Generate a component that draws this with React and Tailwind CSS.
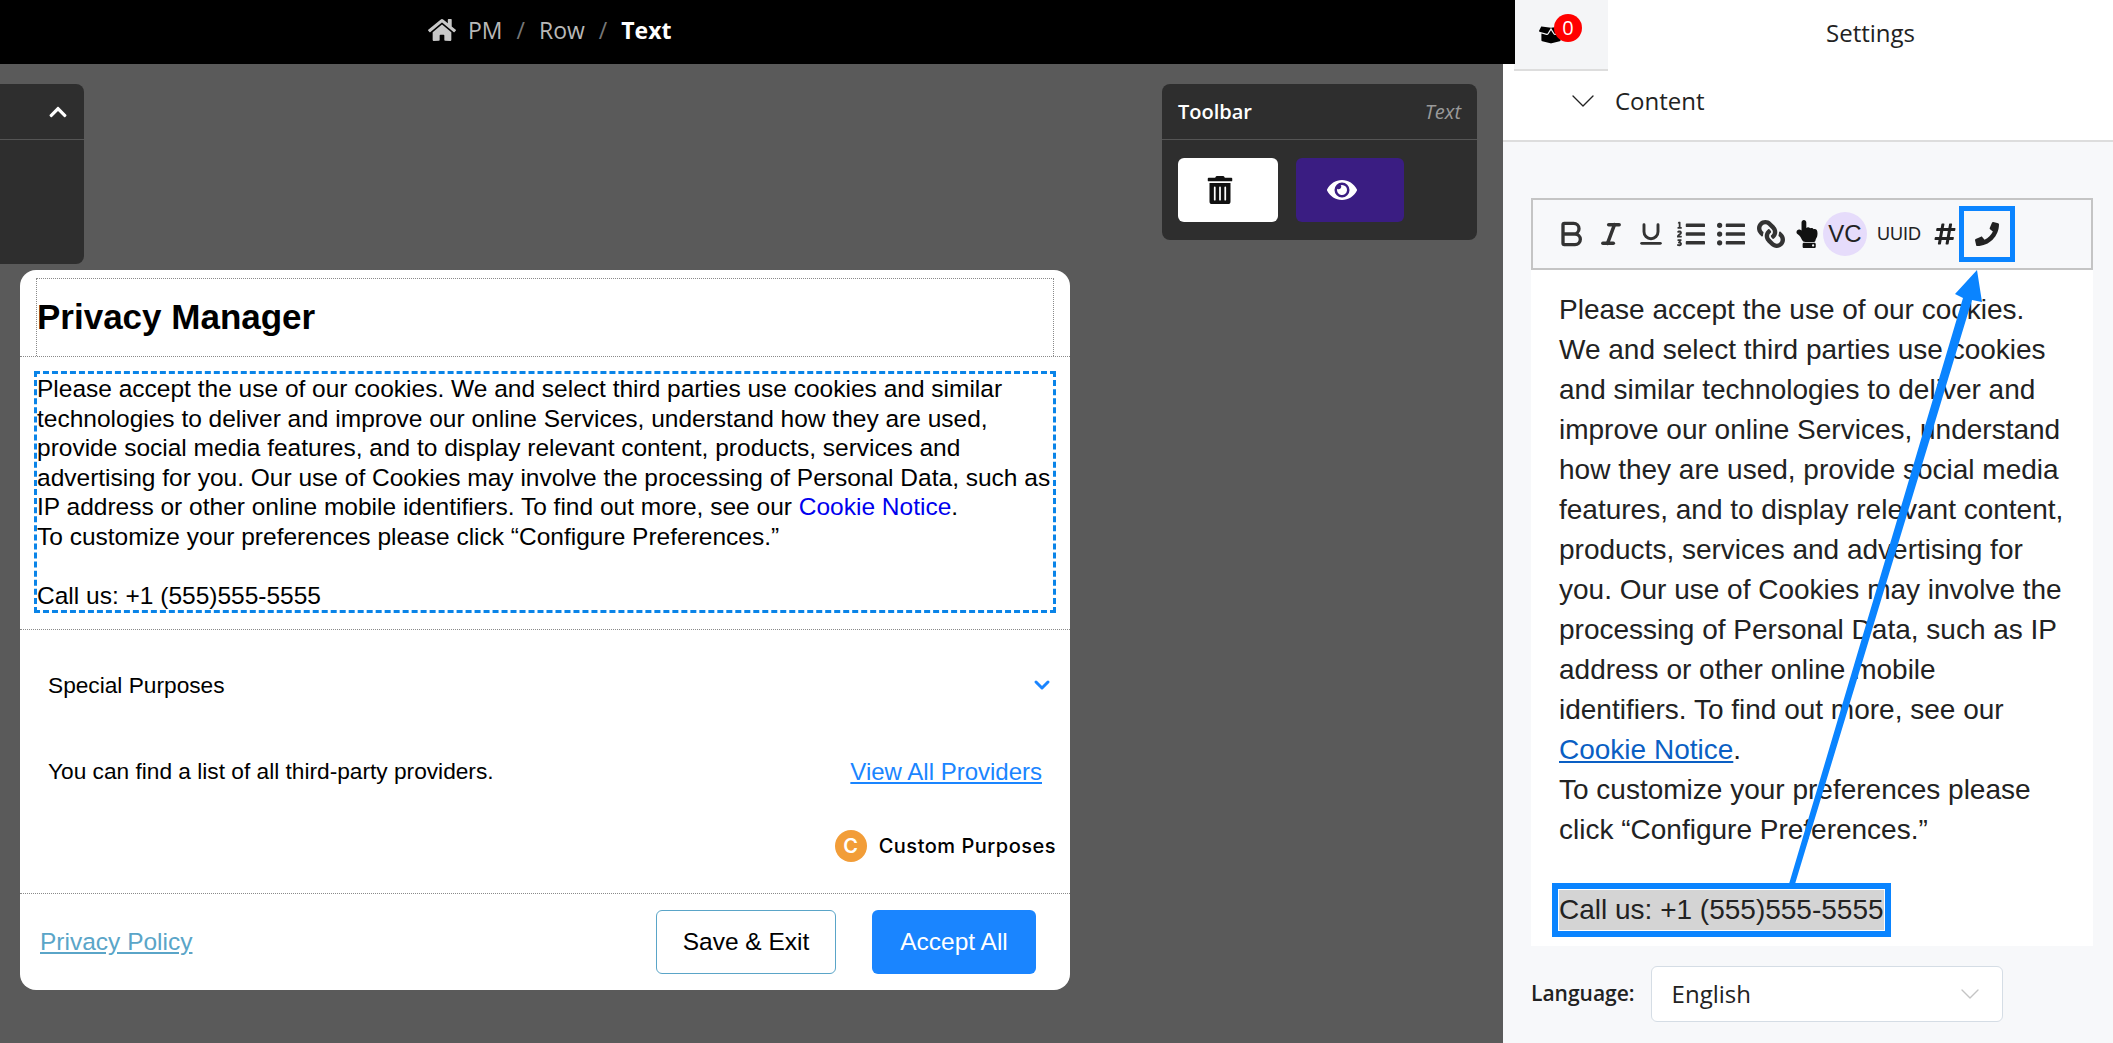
import React from "react";
import { FaHome, FaTrashAlt, FaEye, FaBoxOpen, FaListOl, FaListUl, FaLink, FaHandPointUp, FaPhone, FaChevronUp, FaHashtag } from "react-icons/fa";
import { ChevronDown, Bold, Italic, Underline } from "lucide-react";

function Tool({ children, className = "w-10" }) {
  return <div className={`flex h-14 shrink-0 items-center justify-center text-[#333333] ${className}`}>{children}</div>;
}

export default function App() {
  return (
    <div className="relative flex h-screen w-full overflow-hidden bg-[#5a5a5a] font-['Liberation_Sans',sans-serif]">
      <main className="flex min-w-0 flex-1 flex-col">
        <header className="relative z-10 -mr-3 flex h-16 shrink-0 items-center gap-3 bg-black pb-1 pl-[428px] font-['Open_Sans',sans-serif] text-[23px] text-[#b8b8b8]">
          <FaHome className="size-7 text-[#c8c8c8]" />
          <span>PM</span>
          <span className="px-0.5 text-[#777777]">/</span>
          <span>Row</span>
          <span className="px-0.5 text-[#777777]">/</span>
          <span className="font-bold text-white">Text</span>
        </header>

        <div className="flex items-start justify-between pr-6.5 pt-5">
          <section className="flex h-45 w-21 flex-col rounded-r-lg bg-[#2e2e2e]">
            <div className="flex h-14 items-center justify-end border-b border-[#555555] pr-4 text-white">
              <FaChevronUp className="text-xl" />
            </div>
          </section>
          <section className="w-[315px] rounded-lg bg-[#2e2e2e]">
            <div className="flex h-14 items-center justify-between border-b border-[#555555] px-4 font-['Open_Sans',sans-serif] text-white">
              <span className="text-xl font-semibold">Toolbar</span>
              <span className="text-xl italic text-[#9a9a9a]">Text</span>
            </div>
            <div className="flex gap-4.5 px-4 py-4.5">
              <button className="flex h-16 w-25 items-center justify-center rounded-md bg-white pr-4 text-[#111111]">
                <FaTrashAlt className="size-7" />
              </button>
              <button className="flex h-16 w-27 items-center justify-center rounded-md bg-[#3a1d82] pr-4 text-3xl text-white">
                <FaEye />
              </button>
            </div>
          </section>
        </div>

        <section className="ml-5 mt-1.5 flex h-[720px] w-[1050px] flex-col rounded-2xl bg-white text-[24.5px] text-black">
          <div className="border-b border-dotted border-[#8a8a8a] px-4 pt-2">
            <div className="flex h-[78px] items-center border border-b-0 border-dotted border-[#8a8a8a]">
              <h1 className="text-[35px] font-bold">Privacy Manager</h1>
            </div>
          </div>
          <div className="border-b border-dotted border-[#8a8a8a] px-3.5 pb-4 pt-3.5">
            <div className="border-[3px] border-dashed border-[#0a84e8] leading-[29.5px]">
              Please accept the use of our cookies. We and select third parties use cookies and similar technologies to deliver and improve our online Services, understand how they are used, provide social media features, and to display relevant content, products, services and advertising for you. Our use of Cookies may involve the processing of Personal Data, such as IP address or other online mobile identifiers. To find out more, see our <span className="text-[#0000ee]">Cookie Notice</span>.<br />
              To customize your preferences please click “Configure Preferences.”<br /><br />
              Call us: +1 (555)555-5555
            </div>
          </div>
          <div className="flex flex-1 flex-col">
            <div className="flex items-center justify-between pl-7 pr-4 pt-9.5">
              <span className="text-[22.7px]">Special Purposes</span>
              <ChevronDown className="size-6 text-[#1a85ff]" strokeWidth={3} />
            </div>
            <div className="flex items-center justify-between pl-7 pr-7 pt-13">
              <span className="text-[22.7px]">You can find a list of all third-party providers.</span>
              <a className="mt-0.5 text-2xl text-[#1a85ff] underline">View All Providers</a>
            </div>
            <div className="flex items-center justify-end gap-3 pr-3.5 pt-10.5">
              <span className="flex size-8 items-center justify-center rounded-full bg-[#f29d38] font-['Inter',sans-serif] text-xl font-semibold text-white">C</span>
              <span className="font-['Inter',sans-serif] text-xl font-medium tracking-wide">Custom Purposes</span>
            </div>
          </div>
          <footer className="flex items-center justify-between border-t border-dotted border-[#8a8a8a] pb-4 pl-5 pr-8.5 pt-4">
            <a className="text-[#5aa5c8] underline">Privacy Policy</a>
            <div className="flex gap-9">
              <button className="h-16 w-45 rounded-md border border-[#5aa5c8] bg-white text-black">Save &amp; Exit</button>
              <button className="h-16 w-41 rounded-md bg-[#1a85ff] text-white">Accept All</button>
            </div>
          </footer>
        </section>
      </main>

      <aside className="flex w-[610px] shrink-0 flex-col bg-[#f7f8fa] font-['Open_Sans',sans-serif] text-[#222222]">
        <div className="flex h-[71px] shrink-0 bg-white">
          <div className="w-[11px]" />
          <div className="relative flex h-full w-[94px] items-center justify-center border-b-2 border-[#dddddd] bg-[#f4f5f7]">
            <FaBoxOpen className="mr-5 text-2xl text-black" />
            <span className="absolute left-10 top-3.5 flex size-7 items-center justify-center rounded-full bg-[#ff0000] text-xl text-white">0</span>
          </div>
          <div className="flex flex-1 items-center justify-center pb-1.5 pl-5 text-2xl">Settings</div>
        </div>
        <div className="flex h-[71px] shrink-0 items-center gap-3 border-b-2 border-[#dddddd] bg-white pb-2.5 pl-15 text-2xl">
          <ChevronDown className="size-10" strokeWidth={0.8} />
          <span>Content</span>
        </div>
        <div className="ml-7 mr-5 mt-14">
          <div className="flex h-[72px] items-center border-2 border-[#c4c4c4] pl-4.5">
            <Tool><Bold className="size-8" strokeWidth={2.5} /></Tool>
            <Tool><Italic className="size-7" strokeWidth={3} /></Tool>
            <Tool><Underline className="size-7" strokeWidth={2.5} /></Tool>
            <Tool><FaListOl className="size-7" /></Tool>
            <Tool><FaListUl className="size-7" /></Tool>
            <Tool><FaLink className="size-7 -scale-x-100" /></Tool>
            <Tool className="w-8"><FaHandPointUp className="size-7 text-[#111111]" /></Tool>
            <Tool className="w-11"><span className="flex size-11 items-center justify-center rounded-full bg-[#e6dcfb] font-['Liberation_Sans',sans-serif] text-2xl text-[#222222]">VC</span></Tool>
            <Tool className="w-16"><span className="font-['Liberation_Sans',sans-serif] text-lg text-[#222222]">UUID</span></Tool>
            <Tool className="w-7"><FaHashtag className="size-6 text-[#222222]" /></Tool>
            <Tool className="w-14 border-[5px] border-[#0a84ff]"><FaPhone className="size-6 text-[#222222]" /></Tool>
          </div>
          <div className="bg-white px-7 pb-4 pt-5 font-['Liberation_Sans',sans-serif] text-[28px] leading-10">
            Please accept the use of our cookies. We and select third parties use cookies and similar technologies to deliver and improve our online Services, understand how they are used, provide social media features, and to display relevant content, products, services and advertising for you. Our use of Cookies may involve the processing of Personal Data, such as IP address or other online mobile identifiers. To find out more, see our <span className="text-[#0a5fc4] underline">Cookie Notice</span>.<br />
            To customize your preferences please click “Configure Preferences.”<br /><br />
            <span className="inline-block bg-[#d4d4d4] outline-[6px] outline-offset-1 outline-[#0a84ff]">Call us: +1 (555)555-5555</span>
          </div>
        </div>
        <div className="ml-7 mt-5 flex items-center gap-4">
          <span className="text-[21px] font-semibold">Language:</span>
          <div className="flex h-14 w-88 items-center justify-between rounded-md border border-[#d5dde5] bg-white pl-5 pr-4 text-2xl">
            English
            <ChevronDown className="size-8 text-[#c4c4c4]" strokeWidth={1} />
          </div>
        </div>
      </aside>

      <svg className="pointer-events-none absolute inset-0 h-full w-full" viewBox="0 0 2113 1043">
        <polygon points="1789,884 1795,884 1972,300 1982,302 1977,270 1955,294 1963,298" fill="#0a84ff" />
      </svg>
    </div>
  );
}
